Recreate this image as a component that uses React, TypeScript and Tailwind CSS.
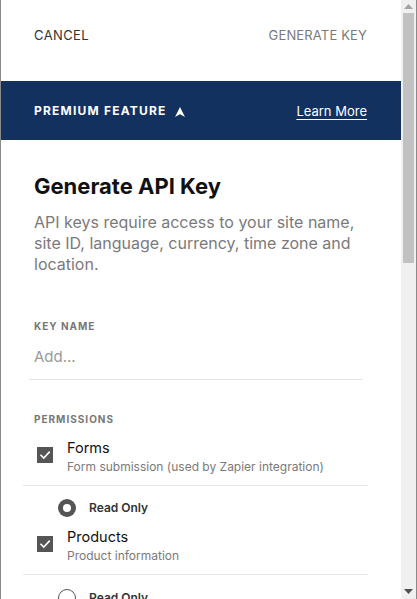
import React from "react";

function Check() {
  return (
    <div className="w-[16px] h-[16px] bg-[#555555] flex items-center justify-center shrink-0 mt-[9px] ml-[3px]">
      <svg width="12" height="12" viewBox="0 0 12 12" fill="none">
        <path d="M2 6.3 L4.8 9 L10.2 3.2" stroke="white" strokeWidth="1.6" strokeLinecap="square" />
      </svg>
    </div>
  );
}

function Radio({ on }: { on: boolean }) {
  return on ? (
    <div className="w-[18px] h-[18px] rounded-full bg-[#555555] flex items-center justify-center shrink-0">
      <div className="w-[8px] h-[8px] rounded-full bg-white" />
    </div>
  ) : (
    <div className="w-[18px] h-[18px] rounded-full border-[1.5px] border-[#555555] bg-white shrink-0" />
  );
}

function Permission({ title, sub, on, last }: { title: string; sub: string; on: boolean; last?: boolean }) {
  return (
    <div className="flex flex-col shrink-0">
      <div className="flex items-start gap-[14px] pb-[9px] border-b border-[#e6e6e6] -ml-[11px] pl-[11px] -mr-[1px]">
        <Check />
        <div className="flex flex-col">
          <div className="text-[14.5px] leading-[20px] text-[#111111]">{title}</div>
          <div className="text-[12px] leading-[18px] text-[#7a7a7a]">{sub}</div>
        </div>
      </div>
      <div className={`flex items-center gap-[13px] ml-[24px] h-[18px] ${last ? "mt-[14px]" : "mt-[13px] mb-[10px]"}`}>
        <Radio on={on} />
        <span className="text-[12px] leading-[18px] font-semibold text-[#333333]">Read Only</span>
      </div>
    </div>
  );
}

export default function App() {
  return (
    <div
      className="w-[417px] h-[599px] flex overflow-hidden bg-white"
      style={{ fontFamily: "Inter, 'Noto Sans', sans-serif" }}
    >
      <div className="w-[1px] bg-[#8a8a8a] shrink-0" />
      <div className="flex-1 flex flex-col overflow-hidden">
        <div className="h-[81px] shrink-0 pb-[9px] flex items-center justify-between pl-[33px] pr-[34px]">
          <span className="text-[13px] tracking-[0.4px] text-[#333333]">CANCEL</span>
          <span className="text-[13px] tracking-[0.15px] text-[#7a7a7a]">GENERATE KEY</span>
        </div>
        <div className="h-[59px] shrink-0 bg-[#13315f] flex items-center justify-between pl-[33px] pr-[34px]">
          <div className="flex items-center gap-[8px]">
            <span className="text-[12px] font-bold tracking-[1.2px] text-white">PREMIUM FEATURE</span>
            <svg width="10" height="10" viewBox="0 0 10 10" className="mt-[3px]">
              <polygon points="5,0 10,10 5,7.3 0,10" fill="white" />
            </svg>
          </div>
          <span className="text-[13px] text-white underline underline-offset-[3px] mt-[3px]">Learn More</span>
        </div>
        <div className="flex flex-col shrink-0 pl-[33px] pr-[34px] pt-[32px]">
          <h1 className="text-[22px] leading-[28px] font-bold text-[#111111]">Generate API Key</h1>
          <p className="mt-[12px] text-[16px] leading-[21px] text-[#7a7a7a]">
            API keys require access to your site name, site ID, language, currency, time zone and location.
          </p>
          <div className="mt-[44px] text-[10px] leading-[14px] font-bold tracking-[1px] text-[#777777]">KEY NAME</div>
          <div className="mt-[14px] -ml-[5px] pl-[5px] mr-[5px] pb-[12px] border-b border-[#e3e3e3]">
            <div className="text-[15px] leading-[20px] text-[#9a9a9a]">Add...</div>
          </div>
          <div className="mt-[32px] text-[10px] leading-[14px] font-bold tracking-[1px] text-[#777777]">PERMISSIONS</div>
          <div className="mt-[12px] flex flex-col">
            <Permission title="Forms" sub="Form submission (used by Zapier integration)" on={true} />
            <Permission title="Products" sub="Product information" on={false} last />
          </div>
        </div>
      </div>
      <div className="w-[15px] bg-[#f0f0f0] shrink-0 flex flex-col items-center">
        <svg width="9" height="5" viewBox="0 0 9 5" className="mt-[4px] shrink-0">
          <polygon points="4.5,0 9,5 0,5" fill="#a3a3a3" />
        </svg>
        <div className="mt-[4px] w-[11px] h-[250px] shrink-0 bg-[#c1c1c1]" />
        <div className="flex-1" />
        <svg width="9" height="5" viewBox="0 0 9 5" className="mb-[5px] shrink-0">
          <polygon points="0,0 9,0 4.5,5" fill="#505050" />
        </svg>
      </div>
      <div className="w-[1px] bg-[#8a8a8a] shrink-0" />
    </div>
  );
}
